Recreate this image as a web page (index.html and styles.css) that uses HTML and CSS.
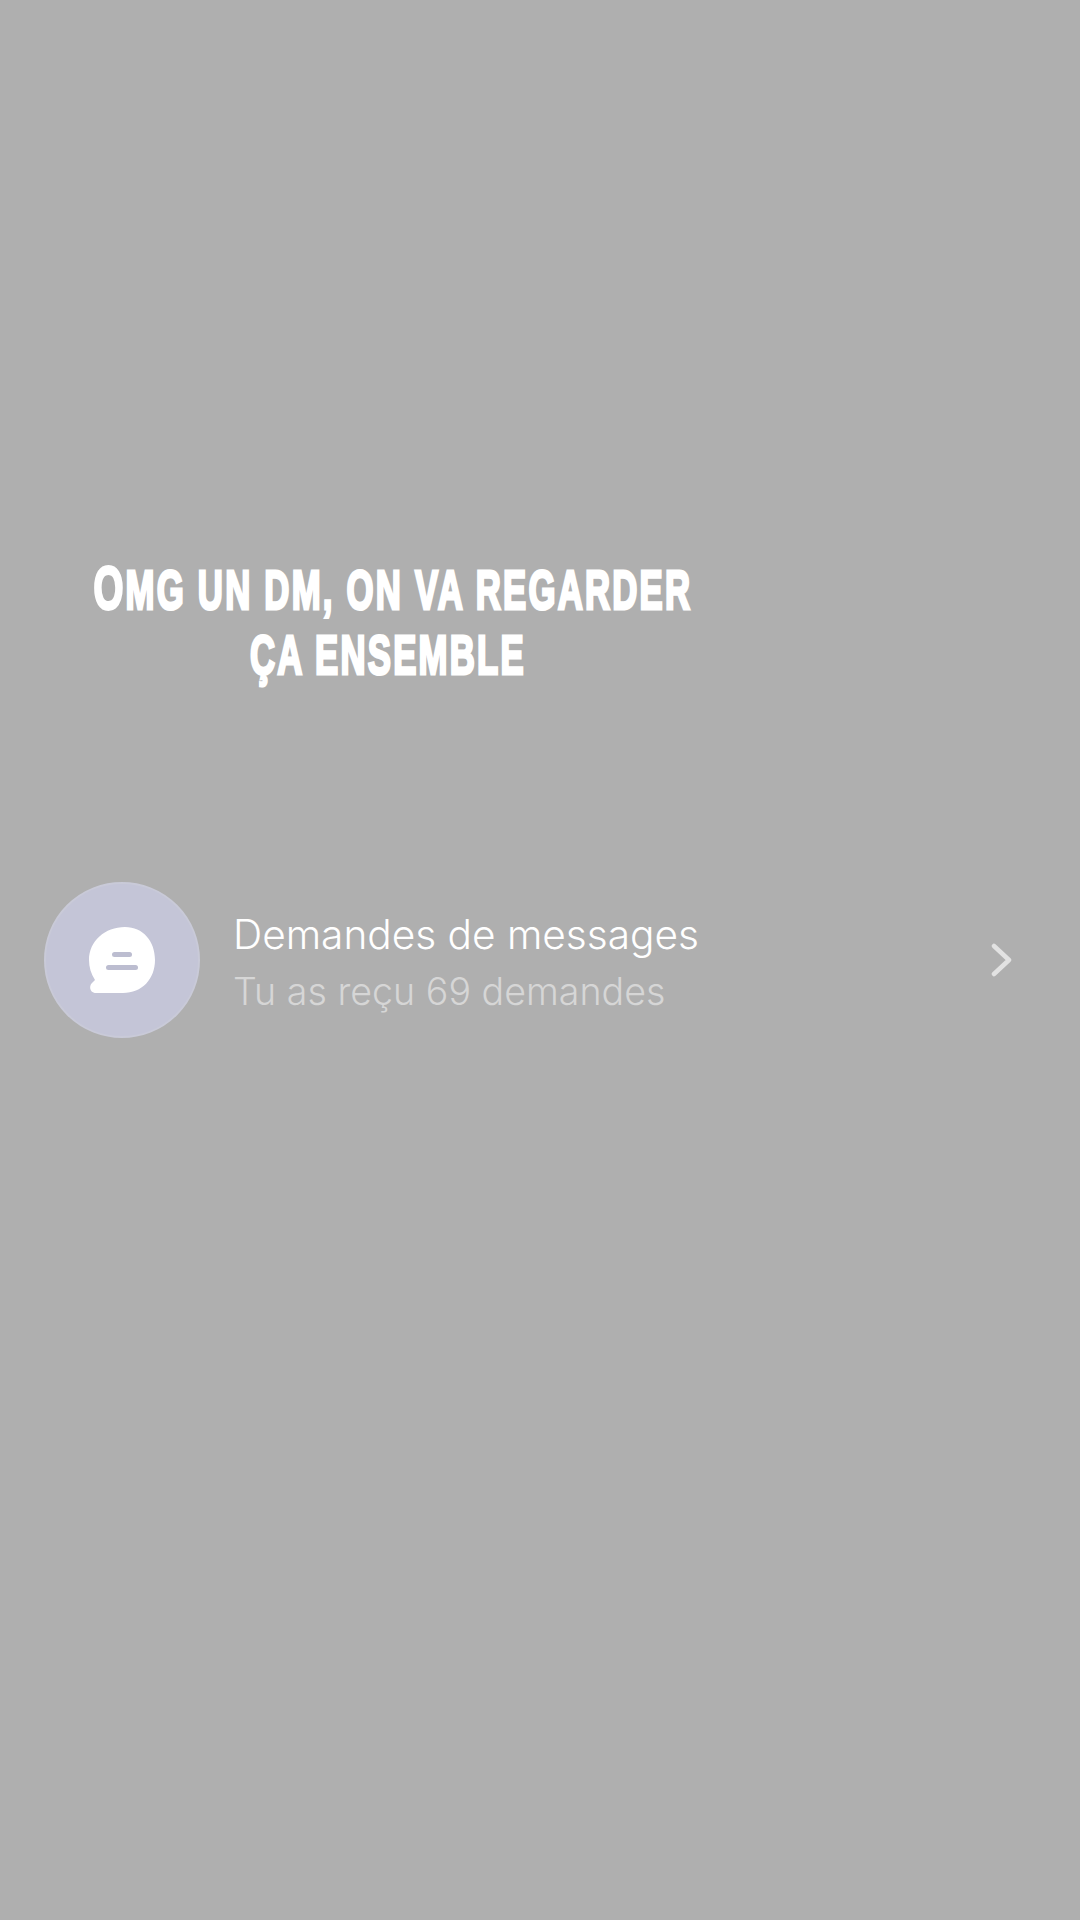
FILE: index.html
```html
<!DOCTYPE html>
<html lang="fr">
<head>
<meta charset="utf-8">
<title>Demandes de messages</title>
<link rel="stylesheet" href="styles.css">
</head>
<body>
<main class="screen">
  <div class="caption-box">
    <h1 class="caption">Omg un dm, on va regarder<br>ça ensemble</h1>
  </div>
  <section class="request-row">
    <div class="avatar">
      <svg class="bubble" viewBox="0 0 66 66" width="66" height="66" aria-hidden="true">
        <path class="bubble-fill" d="M36 0C54 0 66 14 66 33C66 52 53 66 34 66H7C1 66 -1 59 4 55L6 53C2 47 0 40 0 33C0 14 16 0 36 0Z"/>
        <rect class="bubble-line" x="23" y="25" width="20" height="5" rx="2.5"/>
        <rect class="bubble-line" x="17" y="38" width="32" height="5" rx="2.5"/>
      </svg>
    </div>
    <div class="labels">
      <div class="title">Demandes de messages</div>
      <div class="subtitle">Tu as reçu 69 demandes</div>
    </div>
    <svg class="chevron" viewBox="0 0 22 34" width="22" height="34" aria-hidden="true">
      <path d="M3 3L18 17L3 31"/>
    </svg>
  </section>
</main>
</body>
</html>
```
FILE: styles.css
```css
* { box-sizing: border-box; }
html, body { margin: 0; padding: 0; }
body { width: 1080px; height: 1920px; background: #afafaf; overflow: hidden; }
.screen { display: flex; flex-direction: column; height: 1920px; padding-top: 555px; }
.caption-box { width: 775px; height: 130px; display: flex; justify-content: center; }
.caption {
  flex: none;
  margin: 0;
  font-family: "Liberation Sans", sans-serif;
  font-weight: 700;
  font-size: 56px;
  line-height: 65px;
  letter-spacing: 3.6px;
  text-align: center;
  text-transform: uppercase;
  white-space: nowrap;
  color: #fff;
  -webkit-text-stroke: 3px #fff;
  transform: scaleX(0.62);
}
.caption::first-letter { font-size: 62px; margin-left: 16px; }
.request-row {
  display: flex;
  align-items: center;
  margin-top: 197px;
  padding: 0 67px 0 44px;
}
.avatar {
  flex: none;
  width: 156px;
  height: 156px;
  border-radius: 50%;
  border: 2px solid #c9cad8;
  background: #c4c5d7;
  display: flex;
  align-items: center;
  justify-content: center;
}
.bubble-fill { fill: #fff; }
.bubble-line { fill: #bcbdd0; }
.labels { flex: 1; margin-left: 33px; padding-top: 7px; font-family: Inter, "Liberation Sans", sans-serif; font-weight: 300; }
.title { font-size: 40.6px; line-height: 56px; color: #fff; }
.subtitle { font-size: 37.6px; line-height: 57px; color: #d6d6d6; }
.chevron { flex: none; }
.chevron path { fill: none; stroke: #e2e2e2; stroke-width: 4.5; stroke-linecap: round; stroke-linejoin: round; }
```
